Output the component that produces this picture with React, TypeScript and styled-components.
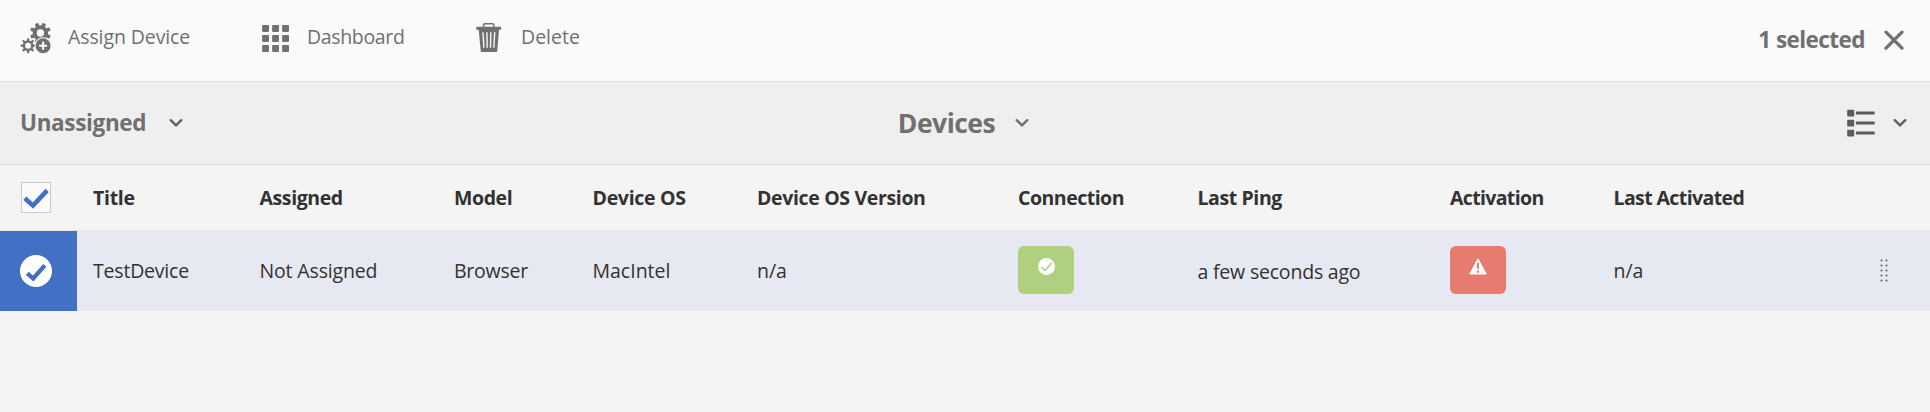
import React from 'react';
import styled, { createGlobalStyle } from 'styled-components';

const GlobalStyle = createGlobalStyle`
  * { box-sizing: border-box; }
  body {
    margin: 0;
    background: #f4f4f4;
    font-family: "Open Sans", "Noto Sans", sans-serif;
    color: #323232;
  }
  svg { display: block; flex: none; }
`;

const Page = styled.main`
  height: 412px;
  overflow: hidden;
`;

const Label = styled.span<{ $size?: number; $weight?: number; $track?: number; $line?: number }>`
  font-size: ${p => p.$size ?? 19.5}px;
  font-weight: ${p => p.$weight ?? 400};
  letter-spacing: ${p => p.$track ?? 0}px;
  line-height: ${p => p.$line ?? 28}px;
  white-space: nowrap;
`;

const Toolbar = styled.header`
  display: flex;
  align-items: flex-start;
  height: 82px;
  padding: 22px 26px 0 20px;
  background: #fafafa;
  border-bottom: 1px solid #dcdcdc;
  color: #707070;
`;

const Action = styled.button<{ $width: number; $gap: number }>`
  display: flex;
  gap: ${p => p.$gap}px;
  width: ${p => p.$width}px;
  padding: 0;
  border: 0;
  background: none;
  font: inherit;
  color: inherit;
`;

const Selection = styled.div`
  display: flex;
  gap: 19px;
  margin: 3px 0 0 auto;
`;

const NavBar = styled.nav`
  display: grid;
  grid-template-columns: 1fr auto 1fr;
  align-items: center;
  height: 83px;
  padding: 0 23px 0 20px;
  background: #efefef;
  border-bottom: 1px solid #dcdcdc;
  color: #707070;
`;

const Picker = styled.div<{ $gap: number; $end?: boolean }>`
  display: flex;
  align-items: center;
  gap: ${p => p.$gap}px;
  justify-content: ${p => (p.$end ? 'flex-end' : 'flex-start')};
`;

const Row = styled.div<{ $head?: boolean }>`
  display: grid;
  grid-template-columns: 93px 166.5px 194.5px 138.5px 164.5px 261px 179.5px 252.5px 163.5px 266.5px 50px;
  align-items: center;
  height: ${p => (p.$head ? 66 : 80)}px;
  background: ${p => (p.$head ? '#f4f4f4' : '#e6e9f1')};
  border-bottom: ${p => (p.$head ? '1px solid #e8e8e8' : '0')};
`;

const Check = styled.div`
  display: flex;
  align-items: center;
  justify-content: center;
  width: 30px;
  height: 31px;
  margin-left: 21px;
  border: 1px solid #cacaca;
  background: #fafafa;
`;

const SelectedCell = styled.div`
  display: flex;
  align-items: center;
  width: 77px;
  height: 100%;
  padding: 0 0 1px 20px;
  background: #4270c4;
`;

const Cell = styled.div<{ $drop?: number; $lift?: number }>`
  display: flex;
  padding-top: ${p => p.$drop ?? 0}px;
  padding-bottom: ${p => p.$lift ?? 0}px;
`;

const Badge = styled.div<{ $color: string }>`
  display: flex;
  justify-content: center;
  width: 56px;
  height: 48px;
  padding-top: 12px;
  border-radius: 6px;
  background: ${p => p.$color};
`;

const teeth = (cx: number, cy: number, r: number, w: number, start: number) =>
  Array.from({ length: 8 }, (_, i) => (
    <rect key={i} x={cx - w / 2} y={cy - r} width={w} height={r / 2.2} rx={0.5}
      transform={`rotate(${start + i * 45} ${cx} ${cy})`} />
  ));

const GearsIcon = () => (
  <svg width="32" height="32" viewBox="0 0 32 32" fill="#707070">
    {teeth(20.4, 11, 10.4, 3.6, 22.5)}
    <circle cx="20.4" cy="11" r="5.7" fill="none" stroke="#707070" strokeWidth="4" />
    {teeth(8.1, 23.7, 7.5, 2.2, 0)}
    <circle cx="8.1" cy="23.7" r="4.2" fill="none" stroke="#707070" strokeWidth="2.4" />
    <circle cx="23.1" cy="23.7" r="8.5" fill="#fafafa" />
    <circle cx="23.1" cy="23.7" r="7.5" />
    <path d="M23.1 19.7v8M19.1 23.7h8" stroke="#fafafa" strokeWidth="2.1" />
  </svg>
);

const GridIcon = () => (
  <svg width="28" height="32" viewBox="0 0 28 32" fill="#707070">
    {[0, 1, 2].flatMap(r => [0, 1, 2].map(c => (
      <rect key={`${r}${c}`} x={0.1 + c * 10} y={3 + r * 10} width="6.9" height="6.9" rx="0.8" />
    )))}
  </svg>
);

const TrashIcon = () => (
  <svg width="26" height="32" viewBox="0 0 26 32" fill="#707070">
    <path d="M7.6 5V2.9Q7.6 1.8 8.7 1.8h8Q17.8 1.8 17.8 2.9V5" fill="none" stroke="#707070" strokeWidth="1.5" />
    <path d="M1 4.8h23.4q.8 0 .8.8V7q0 .8-.8.8H23L21.3 28.8q-.1 1.2-1.2 1.2H5.9q-1.1 0-1.2-1.2L2.7 7.8H1Q.2 7.8.2 7V5.6q0-.8.8-.8z" />
    <path d="M7 10.2l.9 15.6M10.9 10.2l.3 15.6M14.8 10.2l-.3 15.6M18.7 10.2l-.9 15.6" stroke="#fafafa" strokeWidth="1.4" />
  </svg>
);

const CloseIcon = () => (
  <svg width="20" height="30" viewBox="0 0 20 30">
    <path d="M2 7.2l16 16M18 7.2l-16 16" stroke="#707070" strokeWidth="3.2" strokeLinecap="round" />
  </svg>
);

const Chevron = ({ color = '#606060' }: { color?: string }) => (
  <svg width="14" height="10" viewBox="0 0 14 10">
    <path d="M1.7 2.2L7 7.4l5.3-5.2" fill="none" stroke={color} strokeWidth="2.4" strokeLinecap="round" />
  </svg>
);

const ListIcon = () => (
  <svg width="28" height="28" viewBox="0 0 28 28" fill="#5c5c5c">
    {[0.7, 10.7, 20.7].map(y => (
      <React.Fragment key={y}>
        <rect x="0.2" y={y} width="7" height="6.8" rx="0.7" />
        <rect x="8.9" y={y + 1.8} width="18.8" height="3.1" rx="0.4" />
      </React.Fragment>
    ))}
  </svg>
);

const TickIcon = () => (
  <svg width="28" height="29" viewBox="0 0 28 29">
    <path d="M2.8 15.2l8.2 7.4L25.2 7.4" fill="none" stroke="#4270c4" strokeWidth="4.6" />
  </svg>
);

const RoundTick = ({ size, color }: { size: number; color: string }) => (
  <svg width={size} height={size} viewBox="0 0 32 32">
    <circle cx="16" cy="16" r="16" fill="#fff" />
    <path d="M7.3 18.3l5.9 5.2L24.8 10.3" fill="none" stroke={color} strokeWidth={size > 20 ? 4.2 : 3} strokeLinecap={size > 20 ? 'butt' : 'round'} />
  </svg>
);

const AlertIcon = () => (
  <svg width="18" height="17" viewBox="0 0 18 17">
    <path d="M9 .8L17.2 16H.8z" fill="#fff" stroke="#fff" strokeWidth="1" strokeLinejoin="round" />
    <path d="M9 4.8v6M9 12.6v2.2" stroke="#e87b6f" strokeWidth="2" />
  </svg>
);

const GripIcon = () => (
  <svg width="8" height="24" viewBox="0 0 8 24" fill="#666">
    {[0, 1, 2, 3, 4].flatMap(r => [0, 1].map(c => (
      <circle key={`${r}${c}`} cx={1.5 + c * 5} cy={1.5 + r * 5} r="1.05" />
    )))}
  </svg>
);

const headings: [string, number][] = [
  ['Title', -0.3], ['Assigned', -0.4], ['Model', -0.4], ['Device OS', -0.3], ['Device OS Version', -0.35],
  ['Connection', -0.5], ['Last Ping', -0.4], ['Activation', -0.65], ['Last Activated', -0.6],
];

export default function App() {
  return (
    <Page>
      <GlobalStyle />
      <Toolbar>
        <Action $width={242} $gap={16}><GearsIcon /><Label $line={30} $track={-0.1}>Assign Device</Label></Action>
        <Action $width={214} $gap={17}><GridIcon /><Label $line={30} $track={-0.35}>Dashboard</Label></Action>
        <Action $width={120} $gap={19}><TrashIcon /><Label $line={30} $track={0}>Delete</Label></Action>
        <Selection><Label $line={30} $size={22.5} $weight={700} $track={-0.55}>1 selected</Label><CloseIcon /></Selection>
      </Toolbar>
      <NavBar>
        <Picker $gap={23}><Label $size={22.5} $weight={700} $track={-0.35}>Unassigned</Label><Chevron /></Picker>
        <Picker $gap={20}><Label $size={26.5} $weight={700} $track={-0.5}>Devices</Label><Chevron color="#707070" /></Picker>
        <Picker $gap={18} $end><ListIcon /><Chevron /></Picker>
      </NavBar>
      <Row $head>
        <Check><TickIcon /></Check>
        {headings.map(([text, track]) => (
          <Cell key={text}><Label $weight={700} $track={track}>{text}</Label></Cell>
        ))}
      </Row>
      <Row>
        <SelectedCell><RoundTick size={32} color="#4270c4" /></SelectedCell>
        <Cell><Label $track={-0.2}>TestDevice</Label></Cell>
        <Cell><Label $track={-0.15}>Not Assigned</Label></Cell>
        <Cell><Label $track={-0.25}>Browser</Label></Cell>
        <Cell><Label>MacIntel</Label></Cell>
        <Cell><Label>n/a</Label></Cell>
        <Cell $lift={2}><Badge $color="#afd07f"><RoundTick size={17} color="#afd07f" /></Badge></Cell>
        <Cell $drop={2}><Label $track={-0.2}>a few seconds ago</Label></Cell>
        <Cell $lift={2}><Badge $color="#e87b6f"><AlertIcon /></Badge></Cell>
        <Cell><Label>n/a</Label></Cell>
        <GripIcon />
      </Row>
    </Page>
  );
}
